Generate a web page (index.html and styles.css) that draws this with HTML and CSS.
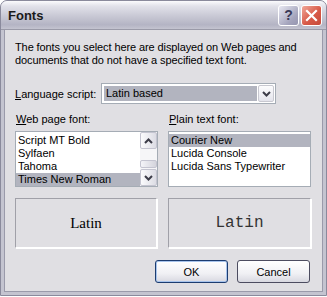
FILE: index.html
```html
<!DOCTYPE html>
<html lang="en">

<head>
    <meta charset="UTF-8">
    <meta name="viewport" content="width=device-width, initial-scale=1.0">
    <title>Fonts</title>
    <link rel="stylesheet" href="styles.css">
</head>

<body>
    <div class="window">
        <div class="titlebar">
            <span class="title">Fonts</span>
            <div class="caption-buttons">
                <div class="cap-btn help">?</div>
                <div class="cap-btn close">
                    <svg width="13" height="13" viewBox="0 0 13 13">
                        <path d="M2 2 L11 11 M11 2 L2 11" stroke="#fff" stroke-width="2.2" stroke-linecap="square" />
                    </svg>
                </div>
            </div>
        </div>
        <div class="content">
            <p class="intro">The fonts you select here are displayed on Web pages and documents that do not have a specified text font.</p>

            <div class="lang-row">
                <span class="label"><u>L</u>anguage script:</span>
                <div class="combo">
                    <div class="combo-value"><span class="sel">Latin based</span></div>
                    <div class="combo-arrow">
                        <svg width="9" height="6" viewBox="0 0 9 6">
                            <path d="M1 1 L4.5 4.5 L8 1" fill="none" stroke="#3c3c48" stroke-width="2" />
                        </svg>
                    </div>
                </div>
            </div>

            <div class="font-cols">
                <div class="font-col">
                    <span class="label"><u>W</u>eb page font:</span>
                    <div class="listbox">
                        <div class="items">
                            <div class="item">Script MT Bold</div>
                            <div class="item">Sylfaen</div>
                            <div class="item">Tahoma</div>
                            <div class="item selected">Times New Roman</div>
                        </div>
                        <div class="scrollbar">
                            <div class="sb-btn">
                                <svg width="9" height="6" viewBox="0 0 9 6">
                                    <path d="M1 5 L4.5 1.5 L8 5" fill="none" stroke="#3c3c48" stroke-width="2" />
                                </svg>
                            </div>
                            <div class="sb-track"><div class="sb-thumb"></div></div>
                            <div class="sb-btn">
                                <svg width="9" height="6" viewBox="0 0 9 6">
                                    <path d="M1 1 L4.5 4.5 L8 1" fill="none" stroke="#3c3c48" stroke-width="2" />
                                </svg>
                            </div>
                        </div>
                    </div>
                </div>
                <div class="font-col">
                    <span class="label"><u>P</u>lain text font:</span>
                    <div class="listbox">
                        <div class="items">
                            <div class="item selected">Courier New</div>
                            <div class="item">Lucida Console</div>
                            <div class="item">Lucida Sans Typewriter</div>
                        </div>
                    </div>
                </div>
            </div>

            <div class="previews">
                <div class="preview serif">Latin</div>
                <div class="preview mono">Latin</div>
            </div>

            <div class="buttons">
                <button class="btn default">OK</button>
                <button class="btn">Cancel</button>
            </div>
        </div>
    </div>
</body>

</html>
```

FILE: styles.css
```css
body {
    margin: 0;
    background: #ffffff;
    font-family: "Liberation Sans", Arial, sans-serif;
    font-size: 11px;
    color: #000;
}

.window {
    width: 327px;
    height: 296px;
    box-sizing: border-box;
    border: 1px solid #8a8a9c;
    border-radius: 7px 7px 0 0;
    background: #c4c4d0;
    display: flex;
    flex-direction: column;
    overflow: hidden;
}

.titlebar {
    height: 28px;
    flex: none;
    display: flex;
    align-items: center;
    justify-content: space-between;
    padding: 0 4px 0 7px;
    background: linear-gradient(#fbfbfd, #e2e2ea 18%, #c8c8d4 55%, #b4b4c4 85%, #c4c4d0);
    border-bottom: 1px solid #9a9aa8;
}

.title {
    font-weight: bold;
    font-size: 13px;
    color: #1a1a1a;
    padding-top: 1px;
}

.caption-buttons {
    display: flex;
    gap: 2px;
}

.cap-btn {
    width: 19px;
    height: 19px;
    border: 1px solid #fff;
    border-radius: 3px;
    display: flex;
    align-items: center;
    justify-content: center;
}

.help {
    background: linear-gradient(135deg, #e8e8f2, #a4a4bc 70%, #9696b0);
    color: #3a3a58;
    font-weight: bold;
    font-size: 14px;
}

.close {
    background: linear-gradient(135deg, #f0a89a, #d85a48 55%, #c64a3c);
}

.content {
    flex: 1;
    margin: 0 3px 3px 3px;
    background: #e0dfe3;
    border-left: 1px solid #9a9aaa;
    border-right: 1px solid #9a9aaa;
    border-bottom: 1px solid #9a9aaa;
    padding: 11px 11px 0 10px;
}

.intro {
    margin: 0;
    line-height: 13px;
    width: 300px;
    letter-spacing: -0.1px;
}

.lang-row {
    display: flex;
    align-items: center;
    margin-top: 16px;
}

.label u {
    text-decoration: underline;
}

.lang-row .label {
    width: 86px;
}

.combo {
    width: 175px;
    height: 21px;
    box-sizing: border-box;
    border: 1px solid #a5acb5;
    background: #fff;
    display: flex;
    padding: 1px;
}

.combo-value {
    flex: 1;
    padding: 1px;
}

.sel {
    display: block;
    background: #b2b4bf;
    height: 15px;
    line-height: 15px;
    padding-left: 2px;
}

.combo-arrow {
    width: 16px;
    box-sizing: border-box;
    border: 1px solid #c8c8d0;
    border-radius: 2px;
    background: linear-gradient(#fcfcfd, #e4e4ec);
    display: flex;
    align-items: center;
    justify-content: center;
}

.font-cols {
    display: flex;
    gap: 10px;
    margin-top: 9px;
}

.font-col {
    width: 144px;
    display: flex;
    flex-direction: column;
}

.font-col .label {
    line-height: 13px;
    padding-left: 1px;
}

.listbox {
    margin-top: 5px;
    height: 56px;
    box-sizing: border-box;
    border: 1px solid #a5acb5;
    background: #fff;
    display: flex;
}

.items {
    flex: 1;
    padding-top: 2px;
}

.item {
    height: 13px;
    line-height: 13px;
    padding-left: 2px;
}

.item.selected {
    background: #b2b4bf;
}

.scrollbar {
    width: 17px;
    display: flex;
    flex-direction: column;
    background: #f6f6f8;
}

.sb-btn {
    height: 17px;
    box-sizing: border-box;
    border: 1px solid #c4c4d0;
    border-radius: 2px;
    background: linear-gradient(90deg, #fbfbfd, #dcdce4);
    display: flex;
    align-items: center;
    justify-content: center;
}

.sb-track {
    flex: 1;
    display: flex;
    align-items: flex-end;
    padding-bottom: 1px;
}

.sb-thumb {
    width: 100%;
    height: 8px;
    box-sizing: border-box;
    border: 1px solid #c4c4d0;
    border-radius: 2px;
    background: linear-gradient(90deg, #f4f4f8, #d4d4dc);
}

.previews {
    display: flex;
    gap: 11px;
    margin-top: 11px;
}

.preview {
    width: 143px;
    height: 50px;
    box-sizing: border-box;
    border: 1px solid #a0a0a8;
    border-right-color: #fff;
    border-bottom-color: #fff;
    box-shadow: 1px 1px 0 #fff;
    display: flex;
    align-items: center;
    justify-content: center;
}

.preview.mono {
    width: 144px;
}

.serif {
    font-family: "Liberation Serif", "Times New Roman", serif;
    font-size: 15px;
}

.mono {
    font-family: "Liberation Mono", "Courier New", monospace;
    font-size: 16px;
    color: #333;
}

.buttons {
    display: flex;
    justify-content: flex-end;
    gap: 9px;
    margin-top: 12px;
    padding-right: 1px;
}

.btn {
    width: 73px;
    height: 23px;
    font-family: "Liberation Sans", Arial, sans-serif;
    font-size: 11px;
    color: #000;
    border: 1px solid #4c4c60;
    border-radius: 3px;
    background: linear-gradient(#ffffff, #f0f0f4 60%, #d8d8e0);
    padding: 0;
}

.btn.default {
    border-color: #1c3c70;
    box-shadow: inset 0 0 0 1px #a8c4ec;
}
```
